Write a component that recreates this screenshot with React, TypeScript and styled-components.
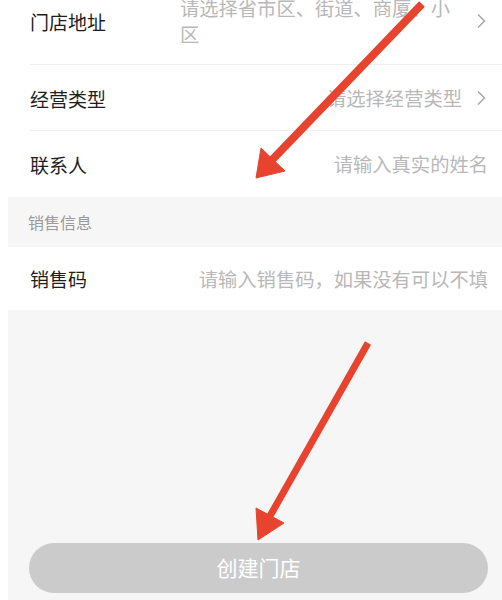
import React from "react";
import styled, { createGlobalStyle } from "styled-components";

const Global = createGlobalStyle`
  html, body { margin: 0; padding: 0; background: #ffffff; overflow: hidden; }
  body { font-family: "Noto Sans CJK SC", "Noto Sans", sans-serif; }
`;

const Page = styled.div`
  position: relative;
  width: 502px;
  height: 600px;
  overflow: hidden;
  background: #ffffff;
`;

const Screen = styled.div`
  margin-left: 8px;
  height: 623px;
  margin-top: -23px;
  background: #f6f6f6;
  display: flex;
  flex-direction: column;
`;

const Group = styled.div`
  background: #ffffff;
  display: flex;
  flex-direction: column;
`;

const Row = styled.div<{ $divider?: boolean; $h?: number }>`
  display: flex;
  align-items: center;
  min-height: ${(p) => p.$h ?? 66}px;
  box-sizing: border-box;
  padding: 18px 14px 18px 22px;
  position: relative;
  ${(p) =>
    p.$divider
      ? `&::after { content: ""; position: absolute; left: 22px; right: 0; bottom: 0; height: 1px; background: #efefef; }`
      : ""}
`;

const Label = styled.div`
  flex: 1;
  font-size: 19px;
  color: #1e1e1e;
  white-space: nowrap;
`;

const Value = styled.div<{ $width?: number }>`
  font-size: 19.3px;
  line-height: 26px;
  color: #b8b8b8;
  ${(p) => (p.$width ? `width: ${p.$width}px; text-align: left;` : "white-space: nowrap;")}
`;

const Chevron = styled.svg`
  width: 10px;
  height: 16px;
  margin-left: 14px;
  margin-right: 2px;
  flex: none;
`;

const SectionTitle = styled.div`
  height: 50px;
  display: flex;
  align-items: center;
  padding-left: 20px;
  font-size: 16px;
  color: #9a9a9a;
`;

const Spacer = styled.div`
  flex: 1;
`;

const Footer = styled.div`
  padding: 0 14px 7px 21px;
`;

const Button = styled.button`
  width: 100%;
  height: 50px;
  border: none;
  border-radius: 25px;
  background: #cbcbcb;
  color: #ffffff;
  font-family: "Noto Sans CJK SC", "Noto Sans", sans-serif;
  font-size: 21px;
  padding: 0 0 2px;
  display: flex;
  align-items: center;
  justify-content: center;
`;

const Annotations = styled.svg`
  position: absolute;
  left: 0;
  top: 0;
  width: 502px;
  height: 600px;
  pointer-events: none;
`;

const Arrow: React.FC<{ shaft: [number, number, number, number]; head: string; w: number }> = ({ shaft, head, w }) => (
  <g fill="#e8432e" stroke="#e8432e">
    <line x1={shaft[0]} y1={shaft[1]} x2={shaft[2]} y2={shaft[3]} strokeWidth={w} strokeLinecap="butt" />
    <polygon points={head} strokeWidth={1} strokeLinejoin="round" />
  </g>
);

const ChevronIcon = () => (
  <Chevron viewBox="0 0 10 16">
    <polyline points="2,1.5 8.5,8 2,14.5" fill="none" stroke="#a8a8a8" strokeWidth="1.5" />
  </Chevron>
);

export default function App() {
  return (
    <>
      <Global />
      <Page>
        <Screen>
          <Group>
            <Row $divider>
              <Label>门店地址</Label>
              <Value $width={282}>请选择省市区、街道、商厦、小区</Value>
              <ChevronIcon />
            </Row>
            <Row $divider>
              <Label>经营类型</Label>
              <Value>请选择经营类型</Value>
              <ChevronIcon />
            </Row>
            <Row>
              <Label>联系人</Label>
              <Value>请输入真实的姓名</Value>
            </Row>
          </Group>
          <SectionTitle>销售信息</SectionTitle>
          <Group>
            <Row $h={63}>
              <Label>销售码</Label>
              <Value>请输入销售码，如果没有可以不填</Value>
            </Row>
          </Group>
          <Spacer />
          <Footer>
            <Button>创建门店</Button>
          </Footer>
        </Screen>
        <Annotations viewBox="0 0 502 600">
          <Arrow shaft={[422, 4, 272, 160]} w={8} head="256,178 261,148 285,171" />
          <Arrow shaft={[368, 343, 270, 516]} w={7} head="258,540 256,508 284,523" />
        </Annotations>
      </Page>
    </>
  );
}
